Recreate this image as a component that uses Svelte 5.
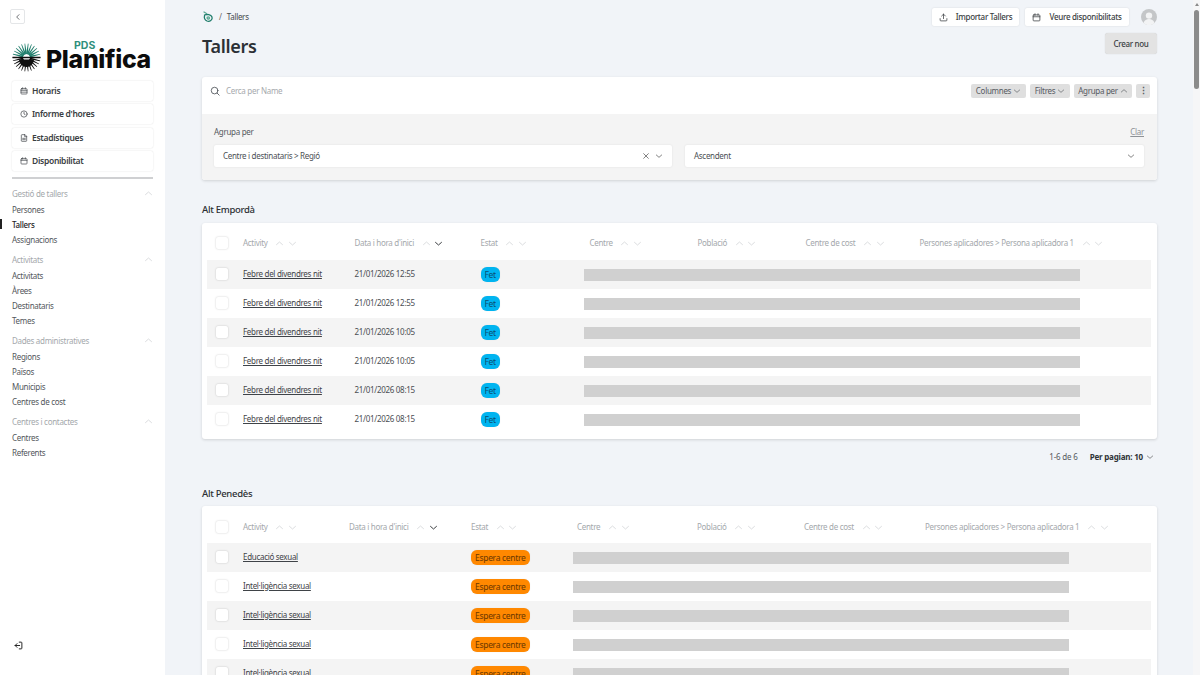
<script>
  const nav = [
    { label: 'Horaris', icon: 'cal2' },
    { label: "Informe d'hores", icon: 'clock' },
    { label: 'Estadístiques', icon: 'doc' },
    { label: 'Disponibilitat', icon: 'cal' }
  ];
  const groups = [
    { title: 'Gestió de tallers', items: ['Persones', 'Tallers', 'Assignacions'] },
    { title: 'Activitats', items: ['Activitats', 'Àrees', 'Destinataris', 'Temes'] },
    { title: 'Dades administratives', items: ['Regions', 'Països', 'Municipis', 'Centres de cost'] },
    { title: 'Centres i contactes', items: ['Centres', 'Referents'] }
  ];
  const columns = ['Activity', "Data i hora d'inici", 'Estat', 'Centre', 'Població', 'Centre de cost', 'Persones aplicadores > Persona aplicadora 1'];
  const rowsA = [
    ['Febre del divendres nit', '21/01/2026 12:55'],
    ['Febre del divendres nit', '21/01/2026 12:55'],
    ['Febre del divendres nit', '21/01/2026 10:05'],
    ['Febre del divendres nit', '21/01/2026 10:05'],
    ['Febre del divendres nit', '21/01/2026 08:15'],
    ['Febre del divendres nit', '21/01/2026 08:15']
  ];
  const rowsB = [
    ['Educació sexual', ''],
    ['Intel·ligència sexual', ''],
    ['Intel·ligència sexual', ''],
    ['Intel·ligència sexual', ''],
    ['Intel·ligència sexual', '']
  ];
  const rays = Array.from({ length: 26 }, (_, i) => (i * 360) / 26);
</script>

{#snippet icon(name, size = 9)}
  <svg class="ico" width={size} height={size} viewBox="0 0 24 24" fill="none" stroke="currentColor" stroke-width="2" stroke-linecap="round" stroke-linejoin="round" aria-hidden="true">
    {#if name === 'cal'}
      <rect x="3" y="5" width="18" height="16" rx="2" /><path d="M3 10h18M8 2v4M16 2v4" />
    {:else if name === 'cal2'}
      <rect x="3" y="5" width="18" height="16" rx="2" /><path d="M3 10h18M3 15.500h18M8 2v4M16 2v4" />
    {:else if name === 'clock'}
      <circle cx="12" cy="12" r="9.500" /><path d="M12 6.500V12l3.500 2" />
    {:else if name === 'doc'}
      <path d="M14 2H6a2 2 0 0 0-2 2v16a2 2 0 0 0 2 2h12a2 2 0 0 0 2-2V8z" /><path d="M14 2v6h6" /><path d="M8 13h8M8 17h8" />
    {:else if name === 'up'}
      <path d="M4 15l8-7 8 7" />
    {:else if name === 'down'}
      <path d="M4 9l8 7 8-7" />
    {:else if name === 'left'}
      <path d="M15 5l-7 7 7 7" />
    {:else if name === 'search'}
      <circle cx="11" cy="11" r="8" /><path d="M17 17l5 5" />
    {:else if name === 'upload'}
      <path d="M3 15v4a2 2 0 0 0 2 2h14a2 2 0 0 0 2-2v-4M12 15V3M7 8l5-5 5 5" />
    {:else if name === 'x'}
      <path d="M5 5l14 14M19 5L5 19" />
    {:else if name === 'logout'}
      <path d="M14 3h5a2 2 0 0 1 2 2v14a2 2 0 0 1-2 2h-5M15 12H3M8 7l-5 5 5 5" />
    {/if}
  </svg>
{/snippet}

{#snippet table(rows, grid, status, statusClass)}
  <div class="card tablecard {grid}">
    <div class="row head">
      <span class="check"></span>
      {#each columns as c, i}
        <span class="th">
          <span>{c}</span>
          <span class="sort">{@render icon('up', 9)}</span>
          <span class={i === 1 ? 'sort on' : 'sort'}>{@render icon('down', 9)}</span>
        </span>
      {/each}
    </div>
    {#each rows as r}
      <div class="row body">
        <span class="check"></span>
        <a href="#top" class="link">{r[0]}</a>
        <span class="date">{r[1]}</span>
        <span class="status"><span class={'pill ' + statusClass}>{status}</span></span>
        <span class="redact"></span>
      </div>
    {/each}
  </div>
{/snippet}

<div class="app">
  <aside class="side">
    <div class="sidetop">
      <button class="back" aria-label="Replegar">{@render icon('left', 8)}</button>
      <div class="logo">
        <svg class="burst" width="29" height="29" viewBox="0 0 58 58" aria-hidden="true">
          {#each rays as a}
            <polygon points="27.300,22 30.700,22 29.600,1 28.400,1" fill={a > 84 && a < 276 ? '#0f0f0f' : '#1f7d6b'} transform={`rotate(${a + 7} 29 29)`} />
          {/each}
          <path d="M1 29h56" stroke="#0f0f0f" stroke-width="3" />
          <path d="M14 33a15 15 0 0 0 30 0z" fill="#0f0f0f" />
        </svg>
        <div class="wordmark">
          <span class="pds">PDS</span>
          <span class="plan">Planifica</span>
        </div>
      </div>
      <nav class="mainnav">
        {#each nav as n}
          <a href="#top" class="navbtn">{@render icon(n.icon, 8)}<span>{n.label}</span></a>
        {/each}
      </nav>
      <div class="divider"></div>
      {#each groups as g}
        <div class="group">
          <div class="grouphead"><span>{g.title}</span>{@render icon('up', 9)}</div>
          {#each g.items as it}
            <a href="#top" class={it === 'Tallers' ? 'item active' : 'item'}>{it}</a>
          {/each}
        </div>
      {/each}
    </div>
    <div class="sidefoot">{@render icon('logout', 9)}</div>
  </aside>

  <main class="main">
    <div class="topbar">
      <div class="crumbs">
        <svg width="12" height="12" viewBox="0 0 24 24" fill="none" stroke-width="2.600" stroke-linecap="round" aria-hidden="true">
          <path d="M5 8c5-2 13-1 15 4 2 6-5 10-10 8-4-2-6-6-5-10" stroke="#1f7d6b" />
          <path d="M10 14c0-3 5-3 5 0s-4 3-4 1" stroke="#5aa994" />
          <path d="M4 2l5 3" stroke="#5aa994" />
        </svg>
        <span class="sep">/</span><span>Tallers</span>
      </div>
      <div class="topactions">
        <button class="white imp">{@render icon('upload', 9)}<span>Importar Tallers</span></button>
        <button class="white see">{@render icon('cal', 9)}<span>Veure disponibilitats</span></button>
        <span class="avatar">
          <svg width="16" height="16" viewBox="0 0 16 16" aria-hidden="true">
            <circle cx="8" cy="8" r="8" fill="#c4c6c8" />
            <circle cx="8" cy="6.600" r="3.200" fill="#f2f3f4" />
            <path d="M2.500 14c1-3 3-4 5.500-4s4.500 1 5.500 4a8 8 0 0 1-11 0z" fill="#f2f3f4" />
          </svg>
        </span>
      </div>
    </div>
    <div class="titlerow">
      <h1>Tallers</h1>
      <button class="create">Crear nou</button>
    </div>

    <section class="card filter">
      <div class="searchrow">
        <span class="searchicon">{@render icon('search', 10)}</span>
        <span class="placeholder">Cerca per Name</span>
        <div class="tools">
          <button class="tool t1">Columnes {@render icon('down', 8)}</button>
          <button class="tool t2">Filtres {@render icon('down', 8)}</button>
          <button class="tool t3">Agrupa per {@render icon('up', 8)}</button>
          <button class="tool dots" aria-label="Més">⋮</button>
        </div>
      </div>
      <div class="grouppanel">
        <div class="panelhead"><span>Agrupa per</span><a href="#top" class="clear">Clar</a></div>
        <div class="selects">
          <div class="select">
            <span>Centre i destinataris &gt; Regió</span>
            <span class="selicons">{@render icon('x', 8)}{@render icon('down', 8)}</span>
          </div>
          <div class="select">
            <span>Ascendent</span>
            <span class="selicons">{@render icon('down', 8)}</span>
          </div>
        </div>
      </div>
    </section>

    <h2 class="first">Alt Empordà</h2>
    {@render table(rowsA, 'gridA', 'Fet', 'blue')}
    <div class="pager">
      <span>1-6 de 6</span>
      <strong>Per pagian: 10</strong>
      {@render icon('down', 8)}
    </div>
    <h2>Alt Penedès</h2>
    {@render table(rowsB, 'gridB', 'Espera centre', 'orange')}
  </main>

  <div class="scrollbar">
    <span class="arrow"></span>
    <span class="thumb"></span>
  </div>
</div>

<style>
  :global(body) {
    margin: 0;
    background: #f1f4f8;
    font-family: "Noto Sans", "Open Sans", sans-serif;
    color: #2a2e33;
  }
  .app {
    display: flex;
    width: 1200px;
    height: 675px;
    overflow: hidden;
    font-size: 8px;
    line-height: 12px;
    letter-spacing: -0.3px;
  }
  a { color: inherit; text-decoration: none; }
  button { font: inherit; letter-spacing: inherit; color: inherit; border: 0; cursor: pointer; }
  .ico { flex: none; display: block; }

  .side {
    width: 165px;
    flex: none;
    background: #fff;
    display: flex;
    flex-direction: column;
    justify-content: space-between;
  }
  .sidetop { padding: 9px 12px 0; }
  .back {
    width: 15px;
    height: 15px;
    margin-left: -2px;
    padding: 0;
    display: flex;
    align-items: center;
    justify-content: center;
    background: #fff;
    border: 1px solid #e4e6e8;
    border-radius: 2px;
  }
  .logo { display: flex; align-items: flex-end; gap: 5px; margin-top: 19px; height: 28px; }
  .burst { flex: none; margin-bottom: -1px; }
  .wordmark { display: flex; flex-direction: column; align-items: flex-start; padding-bottom: 2px; }
  .pds {
    margin-left: 28px;
    font: 700 10.500px/8px "Inter", sans-serif;
    letter-spacing: 0;
    color: #2f8f7c;
  }
  .plan {
    display: block;
    font: 800 24.800px/19px "Inter", sans-serif;
    letter-spacing: -0.3px;
    color: #0c0c0c;
  }
  .mainnav { display: flex; flex-direction: column; gap: 3.400px; margin-top: 10px; width: 141px; }
  .navbtn {
    height: 20px;
    display: flex;
    align-items: center;
    gap: 4px;
    padding-left: 8px;
    font-weight: 600;
    font-size: 8.500px;
    color: #3a3e42;
    background: #fff;
    border-radius: 2px;
    box-shadow: 0 0 1.500px rgba(0, 0, 0, 0.16);
  }
  .divider { height: 2px; width: 141px; background: #cfd0d2; margin: 6px 0 7px; }
  .group { margin-bottom: 5px; width: 141px; }
  .grouphead {
    display: flex;
    justify-content: space-between;
    align-items: center;
    color: #a4a8ac;
    height: 15px;
    margin-bottom: 1px;
  }
  .grouphead .ico { color: #cdd0d3; }
  .item {
    display: block;
    height: 15px;
    line-height: 15px;
    color: #53575c;
    position: relative;
  }
  .item.active { color: #1f2327; font-weight: 500; }
  .item.active::before {
    content: "";
    position: absolute;
    left: -12px;
    top: 2px;
    width: 2px;
    height: 10px;
    background: #222;
  }
  .sidefoot { padding: 0 0 25px 14px; color: #222; }
  .sidefoot .ico { stroke-width: 2.600; }

  .main { flex: 1; min-width: 0; padding: 0 36px 0 37px; }
  .topbar { display: flex; justify-content: space-between; padding-top: 8px; height: 25px; }
  .crumbs { display: flex; align-items: center; height: 18px; gap: 5px; font-size: 8px; color: #45494e; }
  .sep { color: #666; }
  .topactions { display: flex; align-items: flex-start; gap: 6px; }
  .white {
    height: 18px;
    padding: 0;
    display: flex;
    align-items: center;
    justify-content: center;
    gap: 8px;
    background: #fff;
    border-radius: 2px;
    font-weight: 500;
    font-size: 8px;
    color: #3a3e42;
    box-shadow: 0 0 2px rgba(0, 0, 0, 0.12);
  }
  .imp { width: 87px; }
  .see { width: 104px; }
  .avatar { margin-left: 6px; margin-top: 1px; height: 16px; }
  .titlerow { display: flex; justify-content: space-between; align-items: flex-start; height: 44px; }
  h1 { margin: 0; font-size: 18px; line-height: 26px; font-weight: 600; color: #2b3035; letter-spacing: -0.3px; }
  .create {
    width: 52px;
    height: 21px;
    padding: 0;
    background: #e3e3e3;
    border-radius: 3px;
    font-weight: 500;
    font-size: 8px;
    color: #3a3e42;
    box-shadow: 0 0 1px rgba(0, 0, 0, 0.2);
  }

  .card {
    background: #fff;
    border-radius: 3px;
    box-shadow: 0 1px 3px rgba(0, 0, 0, 0.14);
  }
  .filter { height: 103px; overflow: hidden; display: flex; flex-direction: column; }
  .searchrow { height: 37px; flex: none; display: flex; align-items: flex-start; padding: 7px 7px 0 8px; box-sizing: border-box; }
  .searchicon { margin: 2px 6px 0 0; color: #4a4f55; }
  .placeholder { color: #a6a9ad; line-height: 14px; font-size: 8px; }
  .tools { margin-left: auto; display: flex; gap: 4px; }
  .tool {
    height: 14px;
    padding: 0;
    display: flex;
    align-items: center;
    justify-content: center;
    gap: 2px;
    background: #dfdfdf;
    color: #565a5f;
    border-radius: 2px;
    font-size: 8px;
  }
  .t1 { width: 55px; }
  .t2 { width: 40px; }
  .t3 { width: 58px; }
  .dots { width: 14px; font-weight: 700; font-size: 9px; }
  .grouppanel { flex: 1; background: #f4f4f4; padding: 12px 13px 0 12px; }
  .panelhead { display: flex; justify-content: space-between; color: #55595e; font-size: 8px; line-height: 12px; }
  .clear { color: #8e9296; text-decoration: underline; }
  .selects { display: grid; grid-template-columns: 458px 459px; column-gap: 13px; margin-top: 7px; }
  .select {
    height: 22px;
    display: flex;
    align-items: center;
    justify-content: space-between;
    padding: 0 9px;
    background: #fff;
    border-radius: 2px;
    font-size: 8px;
    color: #4c5055;
    box-shadow: 0 0 2px rgba(0, 0, 0, 0.1);
  }
  .selicons { display: flex; gap: 5px; color: #444; }

  h2 { margin: 0; font-size: 9.500px; line-height: 14px; font-weight: 500; color: #2b2f33; padding-top: 12px; height: 19px; box-sizing: content-box; }
  h2.first { padding-top: 23px; height: 20px; }

  .tablecard { padding: 0 6px 5px 5px; }
  .row { display: grid; align-items: center; }
  .gridA .row { grid-template-columns: 36px 111.500px 126px 109px 108px 108px 114px 1fr; }
  .gridB .row { grid-template-columns: 36px 106px 122px 106px 120px 107px 121px 1fr; }
  .head { height: 37px; font-size: 8px; color: #a4a8ac; padding-top: 3px; box-sizing: border-box; }
  .gridB .head { padding-top: 5px; }
  .body { height: 29px; font-size: 8px; color: #4a4e53; background: #fff; }
  .body:nth-child(even) { background: #f4f4f4; }
  .check {
    width: 12px;
    height: 12px;
    margin-left: 9px;
    background: #fff;
    border-radius: 2px;
    box-shadow: 0 0 2px rgba(0, 0, 0, 0.22);
  }
  .body .check { margin-top: -2px; }
  .th { display: flex; align-items: center; gap: 3.700px; white-space: nowrap; }
  .th > span:first-child { margin-right: 4px; }
  .sort { color: #c6c9cc; }
  .sort .ico { stroke-width: 1.700; }
  .sort.on { color: #26292d; }
  .sort.on .ico { stroke-width: 2.400; }
  .link { text-decoration: underline; white-space: nowrap; color: #3f4348; margin-top: -1px; }
  .date { margin-top: -1px; }
  .status { display: block; }
  .pill {
    display: inline-block;
    height: 15px;
    line-height: 15px;
    padding: 0 4px;
    border-radius: 6px;
    font-size: 8.500px;
    box-shadow: 0 0 1px rgba(0,0,0,.15);
  }
  .blue { background: #00b4f0; color: #0a4f72; padding: 0 4px; }
  .orange { background: #ff8800; color: #6a3700; }
  .redact {
    grid-column: 5 / -1;
    height: 12px;
    background: #d0d0d0;
    width: 496px;
    margin-left: -5px;
  }
  .gridA .redact { margin-left: -6px; }
  .gridB .redact { margin-left: -4px; }

  .pager {
    display: flex;
    justify-content: flex-end;
    align-items: center;
    gap: 12px;
    height: 36px;
    padding-right: 3px;
    font-size: 8px;
    letter-spacing: -0.2px;
    color: #55595e;
  }
  .pager strong { font-weight: 700; color: #2f3337; margin-right: -9px; }

  .pager .ico { color: #555; }

  .scrollbar { width: 7px; flex: none; background: #f6f6f7; position: relative; }
  .arrow {
    position: absolute;
    top: 3px;
    left: 1.500px;
    border-left: 2px solid transparent;
    border-right: 2px solid transparent;
    border-bottom: 3px solid #8a8a8a;
  }
  .thumb {
    position: absolute;
    top: 10px;
    left: 1px;
    width: 5px;
    height: 79px;
    border-radius: 3px;
    background: #8b8b8b;
  }
</style>
